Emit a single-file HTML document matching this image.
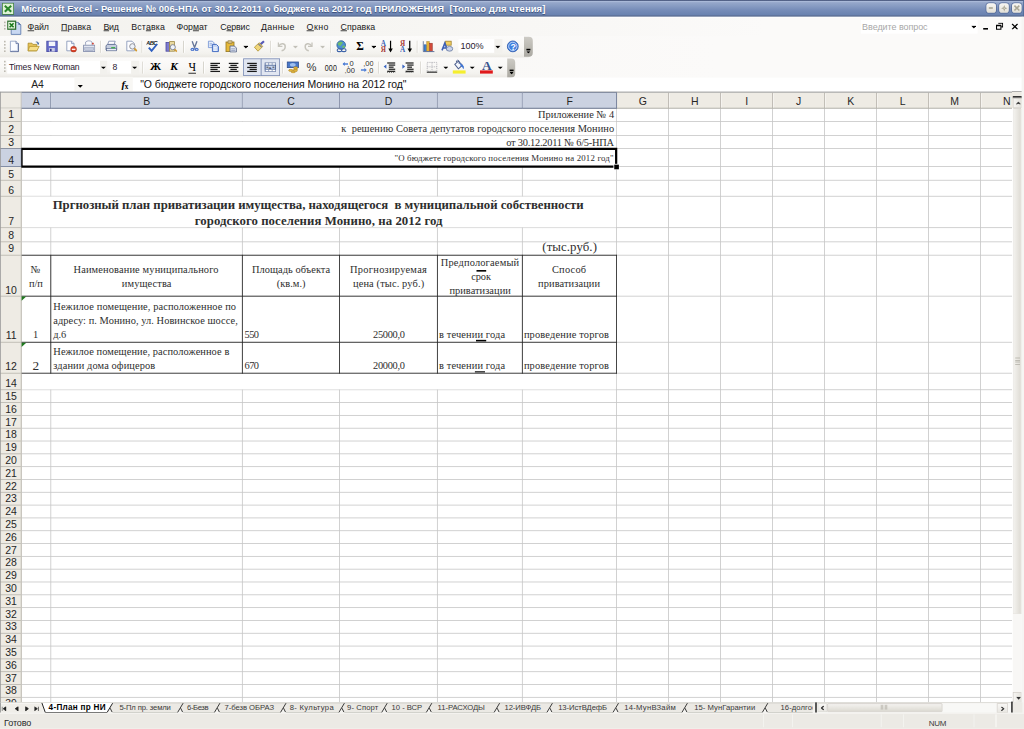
<!DOCTYPE html>
<html lang="ru"><head><meta charset="utf-8"><title>Microsoft Excel</title>
<style>
html,body{margin:0;padding:0;background:#fff;overflow:hidden;width:1024px;height:729px}
#r{position:absolute;left:0;top:0;width:1280px;height:911.25px;transform:scale(0.8);transform-origin:0 0;overflow:hidden;background:#f9f8f6;font-family:"Liberation Sans",sans-serif}
#r div,#r svg{position:absolute}
#r u{text-decoration:underline;text-underline-offset:1px}
</style></head><body><div id="r">
<div style="left:0px;top:0px;width:1280px;height:21px;background:linear-gradient(#4f5c80 0,#56668c 4.5%,#b3c2df 6.5%,#a5b5d5 10%,#95a7ca 16%,#8a9ec4 32%,#768cb8 60%,#6982b0 88%,#5d7199 93%,#586a90 100%);"></div>
<svg style="left:2px;top:3px" width="16" height="16" viewBox="0 0 16 16">
<rect x="0.5" y="0.5" width="15" height="15" fill="#3f7f3f"/><rect x="1.5" y="1.5" width="13" height="13" fill="#dff3d6"/>
<path d="M4 4.2 L12 11.8 M12 4.2 L4 11.8" stroke="#2a862a" stroke-width="2.5"/></svg>
<div style="left:26.47px;top:3px;font:normal bold 11.8px/17px 'Liberation Sans',sans-serif;color:#fff;text-align:left;white-space:nowrap;letter-spacing:0.111px;text-shadow:0 1px 1px #3a4f7a;">Microsoft Excel - Решение № 006-НПА от 30.12.2011 о бюджете на 2012 год ПРИЛОЖЕНИЯ&nbsp; [Только для чтения]</div>
<div style="left:1232.75px;top:3.6px;width:12.4px;height:12.6px;padding-top:1px;border-radius:3.6px;background:linear-gradient(#f8f7f3,#ebe9e2 60%,#e2dfd6);box-shadow:0 0 0 1px rgba(70,92,140,.75);box-sizing:border-box;"><div style="left:3px;top:5.4px;width:5.6px;height:2.2px;background:#a9a694"></div></div>
<div style="left:1248.87px;top:3.6px;width:12.4px;height:12.6px;padding-top:1px;border-radius:3.6px;background:linear-gradient(#f8f7f3,#ebe9e2 60%,#e2dfd6);box-shadow:0 0 0 1px rgba(70,92,140,.75);box-sizing:border-box;"><svg style="left:1.8px;top:2.4px" width="8.6" height="8.6" viewBox="0 0 8 8"><path d="M4 0.3L5.2 3.4H2.8Z M7.7 4L4.6 5.2V2.8Z M4 7.7L2.8 4.6H5.2Z M0.3 4L3.4 2.8V5.2Z" fill="#a9a694"/></svg></div>
<div style="left:1264.99px;top:3.6px;width:12.4px;height:12.6px;padding-top:1px;border-radius:3.6px;background:linear-gradient(#f8f7f3,#ebe9e2 60%,#e2dfd6);box-shadow:0 0 0 1px rgba(70,92,140,.75);box-sizing:border-box;"><svg style="left:2px;top:2.6px" width="8.2" height="8.2" viewBox="0 0 8 8"><path d="M1 1L7 7M7 1L1 7" stroke="#a9a694" stroke-width="1.9"/></svg></div>
<div style="left:1278.5px;top:0px;width:3px;height:21px;background:#4e6897"></div>
<div style="left:0px;top:21px;width:1280px;height:25px;background:linear-gradient(90deg,#f3f2ee,#f6f5f2 35%,#fbfaf9 75%);border-top:1.5px solid #fff;"></div>
<div style="left:5px;top:27px;width:2px;height:2px;background:#b9b6ad"></div>
<div style="left:5px;top:31px;width:2px;height:2px;background:#b9b6ad"></div>
<div style="left:5px;top:35px;width:2px;height:2px;background:#b9b6ad"></div>
<svg style="left:8.5px;top:24.5px" width="19" height="19" viewBox="0 0 19 19">
<path d="M5 3 H14 L17 6 V18 H5 Z" fill="#c9d8f2" stroke="#5573a8" stroke-width="1"/>
<path d="M14 3 L17 6 H14 Z" fill="#46608f"/>
<rect x="0.5" y="1.5" width="10" height="10" fill="#e4f4dc" stroke="#2f6f2f" stroke-width="1.6"/>
<path d="M3 4 L8 9 M8 4 L3 9" stroke="#1d7a1d" stroke-width="2"/></svg>
<div style="left:34.51px;top:26px;font:normal normal 11px/14px 'Liberation Sans',sans-serif;color:#1a1a1a;text-align:left;white-space:nowrap;letter-spacing:-0.191px;"><u>Ф</u>айл</div>
<div style="left:76.38px;top:26px;font:normal normal 11px/14px 'Liberation Sans',sans-serif;color:#1a1a1a;text-align:left;white-space:nowrap;letter-spacing:0.064px;"><u>П</u>равка</div>
<div style="left:129.5px;top:26px;font:normal normal 11px/14px 'Liberation Sans',sans-serif;color:#1a1a1a;text-align:left;white-space:nowrap;letter-spacing:-0.466px;"><u>В</u>ид</div>
<div style="left:164.13px;top:26px;font:normal normal 11px/14px 'Liberation Sans',sans-serif;color:#1a1a1a;text-align:left;white-space:nowrap;letter-spacing:0.160px;">Вст<u>а</u>вка</div>
<div style="left:220.75px;top:26px;font:normal normal 11px/14px 'Liberation Sans',sans-serif;color:#1a1a1a;text-align:left;white-space:nowrap;letter-spacing:-0.071px;">Фор<u>м</u>ат</div>
<div style="left:275.38px;top:26px;font:normal normal 11px/14px 'Liberation Sans',sans-serif;color:#1a1a1a;text-align:left;white-space:nowrap;letter-spacing:-0.164px;">С<u>е</u>рвис</div>
<div style="left:326.38px;top:26px;font:normal normal 11px/14px 'Liberation Sans',sans-serif;color:#1a1a1a;text-align:left;white-space:nowrap;letter-spacing:0.373px;"><u>Д</u>анные</div>
<div style="left:383.25px;top:26px;font:normal normal 11px/14px 'Liberation Sans',sans-serif;color:#1a1a1a;text-align:left;white-space:nowrap;letter-spacing:0.554px;"><u>О</u>кно</div>
<div style="left:425.75px;top:26px;font:normal normal 11px/14px 'Liberation Sans',sans-serif;color:#1a1a1a;text-align:left;white-space:nowrap;letter-spacing:0.011px;"><u>С</u>правка</div>
<div style="left:1075.62px;top:24.6px;width:146.88px;height:17.6px;background:#fff;"></div>
<div style="left:1077.62px;top:25.6px;font:normal normal 11.2px/14px 'Liberation Sans',sans-serif;color:#a8a8a8;text-align:left;white-space:nowrap;letter-spacing:-0.047px;">Введите вопрос</div>
<svg style="left:1213.5800000000002px;top:31.85px" width="6.6" height="3.8" viewBox="0 0 10 5"><path d="M0 0H10L5 5Z" fill="#000"/></svg>
<div style="left:1228.62px;top:35px;width:6.4px;height:2.1px;background:#000"></div>
<svg style="left:1245.0px;top:28px" width="9" height="9.6" viewBox="0 0 11 11">
<path d="M3.5 0.8H10.2V6.5H8" fill="none" stroke="#000" stroke-width="1.6"/><path d="M0.8 4H7.5V10.2H0.8Z" fill="none" stroke="#000" stroke-width="1.6"/><path d="M0.8 4.6H7.5" stroke="#000" stroke-width="1.6"/></svg>
<svg style="left:1264.25px;top:28.6px" width="9" height="8.6" viewBox="0 0 10 10"><path d="M1 1L9 9M9 1L1 9" stroke="#000" stroke-width="2"/></svg>
<div style="left:0px;top:45px;width:1280px;height:52.5px;background:linear-gradient(90deg,#f7f6f3,#f9f8f6 40%,#fbfaf9 70%);"></div>
<div style="left:0px;top:45px;width:662.5px;height:26.5px;background:linear-gradient(#fcfbfa 0,#f9f8f6 45%,#f3f2ee 80%,#eae8e3 100%);border-radius:0 0 3px 0;"></div>
<div style="left:0px;top:72px;width:640.0px;height:25px;background:linear-gradient(#fcfbfa 0,#f9f8f6 45%,#f3f2ee 80%,#eae8e3 100%);border-radius:0 0 3px 0;"></div>
<div style="left:5px;top:51px;width:2px;height:2px;background:#bdbab1"></div>
<div style="left:5px;top:76px;width:2px;height:2px;background:#bdbab1"></div>
<div style="left:5px;top:55px;width:2px;height:2px;background:#bdbab1"></div>
<div style="left:5px;top:80px;width:2px;height:2px;background:#bdbab1"></div>
<div style="left:5px;top:59px;width:2px;height:2px;background:#bdbab1"></div>
<div style="left:5px;top:84px;width:2px;height:2px;background:#bdbab1"></div>
<div style="left:5px;top:63px;width:2px;height:2px;background:#bdbab1"></div>
<div style="left:5px;top:88px;width:2px;height:2px;background:#bdbab1"></div>
<div style="left:125.12px;top:50.5px;width:1px;height:15px;background:#cfccc4"></div>
<div style="left:126.12px;top:50.5px;width:1px;height:15px;background:#fff"></div>
<div style="left:176.62px;top:50.5px;width:1px;height:15px;background:#cfccc4"></div>
<div style="left:177.62px;top:50.5px;width:1px;height:15px;background:#fff"></div>
<div style="left:229.0px;top:50.5px;width:1px;height:15px;background:#cfccc4"></div>
<div style="left:230.0px;top:50.5px;width:1px;height:15px;background:#fff"></div>
<div style="left:337.87px;top:50.5px;width:1px;height:15px;background:#cfccc4"></div>
<div style="left:338.87px;top:50.5px;width:1px;height:15px;background:#fff"></div>
<div style="left:413.25px;top:50.5px;width:1px;height:15px;background:#cfccc4"></div>
<div style="left:414.25px;top:50.5px;width:1px;height:15px;background:#fff"></div>
<div style="left:521.38px;top:50.5px;width:1px;height:15px;background:#cfccc4"></div>
<div style="left:522.38px;top:50.5px;width:1px;height:15px;background:#fff"></div>
<div style="left:178.25px;top:76.5px;width:1px;height:15px;background:#cfccc4"></div>
<div style="left:179.25px;top:76.5px;width:1px;height:15px;background:#fff"></div>
<div style="left:253.88px;top:76.5px;width:1px;height:15px;background:#cfccc4"></div>
<div style="left:254.88px;top:76.5px;width:1px;height:15px;background:#fff"></div>
<div style="left:352.75px;top:76.5px;width:1px;height:15px;background:#cfccc4"></div>
<div style="left:353.75px;top:76.5px;width:1px;height:15px;background:#fff"></div>
<div style="left:473.25px;top:76.5px;width:1px;height:15px;background:#cfccc4"></div>
<div style="left:474.25px;top:76.5px;width:1px;height:15px;background:#fff"></div>
<div style="left:525.12px;top:76.5px;width:1px;height:15px;background:#cfccc4"></div>
<div style="left:526.12px;top:76.5px;width:1px;height:15px;background:#fff"></div>
<svg style="left:10.37px;top:50.0px" width="16" height="16" viewBox="0 0 16 16"><path d="M3 1.5H10L13 4.5V14.5H3Z" fill="#fbfcff" stroke="#8a9ac0"/><path d="M10 1.5V4.5H13" fill="#dfe6f5" stroke="#5d6f9c"/><path d="M13 4.5V14.5H3" stroke="#4f618e" fill="none"/><path d="M11.8 6V13.4H4.5" stroke="#c3cde6" fill="none"/></svg>
<svg style="left:33.88px;top:50.0px" width="16" height="16" viewBox="0 0 16 16"><path d="M1 4H6L7 5.5H12V13.5H1Z" fill="#e8c45a" stroke="#a98a2a"/><path d="M3 8H15L12 13.5H1Z" fill="#f6df8c" stroke="#b6962f"/><path d="M10 2.5C12 1 13.5 2 14 3.5L15 3 14.5 6 12 5 13 4.2C12.5 3 11.5 2.8 10 2.5Z" fill="#4a6ea8"/></svg>
<svg style="left:57.25px;top:50.0px" width="16" height="16" viewBox="0 0 16 16"><rect x="1.5" y="1.5" width="13" height="13" fill="#686dca" stroke="#4347a0"/><rect x="4" y="2" width="8" height="5.5" fill="#f3f4fb"/><rect x="4.5" y="10" width="7" height="4.5" fill="#c9cbe6"/><rect x="5.5" y="11" width="2" height="3" fill="#35388a"/></svg>
<svg style="left:80.5px;top:50.0px" width="16" height="16" viewBox="0 0 16 16"><path d="M2.5 1.5H8.5L11.5 4.5V13.5H2.5Z" fill="#fdfdff" stroke="#7f8fb4"/><path d="M8.5 1.5V4.5H11.5" fill="#dfe6f5" stroke="#7f8fb4"/><circle cx="11" cy="11.5" r="3.6" fill="#d9452b" stroke="#9a2a17" stroke-width=".6"/><rect x="8.8" y="10.8" width="4.4" height="1.6" fill="#fff"/></svg>
<svg style="left:102.62px;top:50.0px" width="16" height="16" viewBox="0 0 16 16"><path d="M4 6V2.5C6 0.5 10 0.5 12 2.5V6" fill="#fbfbfe" stroke="#8c97b5"/><rect x="1.5" y="6.5" width="14" height="8" fill="#e3e7f1" stroke="#7d88a8"/><rect x="3" y="9.5" width="11" height="3.5" fill="#c4cbdd" stroke="#8c97b5" stroke-width=".6"/><rect x="12" y="3.5" width="2.2" height="2" fill="#d0463a"/></svg>
<svg style="left:131.38px;top:50.0px" width="16" height="16" viewBox="0 0 16 16"><path d="M5 1.5H13L11.5 6H3.5Z" fill="#fdfdff" stroke="#7a88ac"/><path d="M1.5 7 3.5 5.5H13.5L15 7V12.5H1.5Z" fill="#c5cddf" stroke="#55658c"/><rect x="2" y="10.5" width="12.5" height="3" fill="#e9edf6" stroke="#55658c" stroke-width=".8"/><rect x="8" y="8.8" width="5" height="1.6" fill="#3fae4a"/></svg>
<svg style="left:155.5px;top:50.0px" width="16" height="16" viewBox="0 0 16 16"><path d="M2.5 1.5H9L12 4.5V13.5H2.5Z" fill="#fdfdff" stroke="#7f8fb4"/><circle cx="9.5" cy="8" r="3.4" fill="#eef3fb" stroke="#8d8d93" stroke-width="1.2"/><path d="M12 10.5L15 13.8" stroke="#d29a2f" stroke-width="2.2"/></svg>
<svg style="left:182.62px;top:50.0px" width="16" height="16" viewBox="0 0 16 16"><text x="-0.5" y="6.2" font-family="Liberation Sans,sans-serif" font-size="7.4" font-weight="bold" font-style="italic" fill="#222" textLength="14.5">ABC</text><path d="M3 9.5L6.5 13.5L13.5 5" fill="none" stroke="#2f5fc0" stroke-width="2.4"/></svg>
<svg style="left:206.38px;top:50.0px" width="16" height="16" viewBox="0 0 16 16"><rect x="1.5" y="3" width="4.5" height="11" fill="#7d7bd0" stroke="#4c4a9e"/><rect x="6" y="2" width="6" height="12" fill="#e9d9a0" stroke="#9f8a45"/><circle cx="10" cy="9" r="3.2" fill="#eef3fb" stroke="#7a8092" stroke-width="1.1"/><path d="M12.3 11.5L15 14.5" stroke="#d29a2f" stroke-width="2"/></svg>
<svg style="left:234.5px;top:50.0px" width="16" height="16" viewBox="0 0 16 16"><path d="M5.2 1.5L8.2 9.5L11.2 1.5" stroke="#66769a" stroke-width="1.7" fill="none"/><ellipse cx="5.6" cy="11.8" rx="2.5" ry="2" fill="#4a74cc"/><ellipse cx="10.8" cy="11.8" rx="2.5" ry="2" fill="#4a74cc"/><ellipse cx="5.4" cy="12" rx="0.9" ry="0.7" fill="#dfe8fa"/><ellipse cx="11" cy="12" rx="0.9" ry="0.7" fill="#dfe8fa"/></svg>
<svg style="left:258.5px;top:50.0px" width="16" height="16" viewBox="0 0 16 16"><path d="M1.5 1.5H6.5L8.5 3.5V9.5H1.5Z" fill="#e4ecfa" stroke="#6f8fd2"/><path d="M3 4.5H6M3 6.5H6" stroke="#8aa5da" stroke-width=".9"/><path d="M6.5 5.5H11.5L14 8V14.5H6.5Z" fill="#c3d4f3" stroke="#3f68c0" stroke-width="1.2"/><path d="M8 9.2H12M8 11.2H12M8 13H12" stroke="#fff" stroke-width=".9"/></svg>
<svg style="left:281.38px;top:50.0px" width="16" height="16" viewBox="0 0 16 16"><rect x="1.5" y="2.5" width="10" height="12" fill="#e6b93a" stroke="#94761f"/><rect x="4" y="1" width="5" height="3" fill="#d9c48a" stroke="#7d6a35" stroke-width=".7"/><path d="M6.5 7.5H12L14.5 10V15H6.5Z" fill="#e4e9f4" stroke="#4f5d80"/><path d="M8 11H13M8 13H13" stroke="#7f8cae" stroke-width=".9"/></svg>
<svg style="left:303.58px;top:56.97px" width="6.6" height="3.8" viewBox="0 0 10 5"><path d="M0 0H10L5 5Z" fill="#000"/></svg>
<svg style="left:316.38px;top:50.0px" width="16" height="16" viewBox="0 0 16 16"><path d="M9.5 5.5L14 1.5" stroke="#5559b8" stroke-width="2.6"/><path d="M2 9L8 3.5L12.5 8L6.5 14Z" fill="#f0d67a" stroke="#b09335"/><path d="M7 5L11 9" stroke="#7d7d85" stroke-width="1.4"/></svg>
<svg style="left:343.88px;top:50.0px" width="16" height="16" viewBox="0 0 16 16"><path d="M4 3V8H9" fill="none" stroke="#c6c4bc" stroke-width="1.6"/><path d="M4.5 7.5C7 3 13 4 12.5 9C12.2 11.5 10.5 13 8 13.5" fill="none" stroke="#c6c4bc" stroke-width="1.8"/></svg>
<svg style="left:366.08px;top:56.97px" width="6.6" height="3.8" viewBox="0 0 10 5"><path d="M0 0H10L5 5Z" fill="#c2c0b8"/></svg>
<svg style="left:378.25px;top:50.0px" width="16" height="16" viewBox="0 0 16 16"><path d="M12 3V8H7" fill="none" stroke="#c6c4bc" stroke-width="1.6"/><path d="M11.5 7.5C9 3 3 4 3.5 9C3.8 11.5 5.5 13 8 13.5" fill="none" stroke="#c6c4bc" stroke-width="1.8"/></svg>
<svg style="left:399.82px;top:56.97px" width="6.6" height="3.8" viewBox="0 0 10 5"><path d="M0 0H10L5 5Z" fill="#c2c0b8"/></svg>
<svg style="left:418.88px;top:50.0px" width="16" height="16" viewBox="0 0 16 16"><circle cx="7.5" cy="6.3" r="5.4" fill="#4c8fd2" stroke="#2f6399"/><path d="M3 4.5C4.5 1.8 8 1.5 9.5 3C9 5 7.5 5.5 6.5 7.5C5 7.5 3.5 6.5 3 4.5Z" fill="#6fbd6a"/><path d="M9 7.5C10.5 6.5 12 7 12.3 8.3C11.5 10 10 10.5 9 9.5Z" fill="#6fbd6a"/><rect x="2.5" y="11" width="5.5" height="3.6" rx="1.8" fill="none" stroke="#3d63a8" stroke-width="1.4"/><rect x="8" y="11" width="5.5" height="3.6" rx="1.8" fill="none" stroke="#3d63a8" stroke-width="1.4"/></svg>
<div style="left:442.5px;top:48.5px;width:15.25px;font:normal bold 14.5px/18px 'Liberation Serif',serif;color:#000;text-align:center;white-space:nowrap;">Σ</div>
<svg style="left:463.58px;top:56.97px" width="6.6" height="3.8" viewBox="0 0 10 5"><path d="M0 0H10L5 5Z" fill="#000"/></svg>
<svg style="left:476.38px;top:50.0px" width="16" height="16" viewBox="0 0 16 16"><text x="0" y="7.5" font-family="Liberation Serif,serif" font-size="9" font-weight="bold" fill="#3b62b5">А</text><text x="0" y="15.5" font-family="Liberation Serif,serif" font-size="9" font-weight="bold" fill="#a8413a">Я</text><path d="M12.2 1V13" stroke="#000" stroke-width="1.5"/><path d="M9.4 10.5H15L12.2 15.5Z" fill="#000"/></svg>
<svg style="left:500.12px;top:50.0px" width="16" height="16" viewBox="0 0 16 16"><text x="0" y="7.5" font-family="Liberation Serif,serif" font-size="9" font-weight="bold" fill="#a8413a">Я</text><text x="0" y="15.5" font-family="Liberation Serif,serif" font-size="9" font-weight="bold" fill="#3b62b5">А</text><path d="M12.2 1V13" stroke="#000" stroke-width="1.5"/><path d="M9.4 10.5H15L12.2 15.5Z" fill="#000"/></svg>
<svg style="left:527.62px;top:50.0px" width="16" height="16" viewBox="0 0 16 16"><rect x="2" y="6" width="3" height="8" fill="#3f7fd0" stroke="#2a5594" stroke-width=".6"/><rect x="5.5" y="2" width="3" height="12" fill="#e8b33a" stroke="#9f7a21" stroke-width=".6"/><rect x="9" y="4" width="3.4" height="10" fill="#d14a3a" stroke="#8e2d22" stroke-width=".6"/><path d="M1 1.5V14.5H15" fill="none" stroke="#5c6f99" stroke-width="1.2"/></svg>
<svg style="left:551.38px;top:50.0px" width="16" height="16" viewBox="0 0 16 16"><rect x="6" y="1.5" width="7" height="5" fill="#f2cf5f" stroke="#a08330"/><path d="M1.5 13L5 4L8.5 13M3 10H7" fill="none" stroke="#3c5fb4" stroke-width="2"/><ellipse cx="11" cy="11" rx="4" ry="3" fill="#c9d3ea" stroke="#6a7a9f"/></svg>
<div style="left:572.5px;top:49.4px;width:45.0px;height:17.1px;background:#fff"></div>
<div style="left:617.5px;top:49.4px;width:10.62px;height:17.1px;background:#f2f1ed"></div>
<div style="left:575.74px;top:50px;font:normal normal 11.4px/15px 'Liberation Sans',sans-serif;color:#2a2030;text-align:left;white-space:nowrap;letter-spacing:-0.122px;">100%</div>
<svg style="left:619.2px;top:57.1px" width="6.6" height="3.8" viewBox="0 0 10 5"><path d="M0 0H10L5 5Z" fill="#000"/></svg>
<svg style="left:633.25px;top:50.0px" width="16" height="16" viewBox="0 0 16 16"><circle cx="8" cy="8" r="6.8" fill="#3f7fe0" stroke="#2a55a8"/><circle cx="8" cy="8" r="5.2" fill="none" stroke="#cfe0fb" stroke-width="1.1"/><text x="5" y="12" font-family="Liberation Sans,sans-serif" font-size="11" font-weight="bold" fill="#fff">?</text></svg>
<div style="left:655.0px;top:46px;width:10.87px;height:25px;background:linear-gradient(#cdcbc5,#bab8b1 55%,#aba9a2);border-radius:0 5px 5px 0;"><div style="left:3px;top:15px;width:5px;height:1.5px;background:#000"></div><svg style="left:3px;top:18px" width="5" height="3" viewBox="0 0 10 6"><path d="M0 0H10L5 6Z" fill="#000"/></svg></div>
<div style="left:633.75px;top:72.5px;width:10.38px;height:24.5px;background:linear-gradient(#cdcbc5,#bab8b1 55%,#aba9a2);border-radius:0 5px 5px 0;"><div style="left:3px;top:14.5px;width:5px;height:1.5px;background:#000"></div><svg style="left:3px;top:17.5px" width="5" height="3" viewBox="0 0 10 6"><path d="M0 0H10L5 6Z" fill="#000"/></svg></div>
<div style="left:9.25px;top:75.5px;width:115.25px;height:16.5px;background:#fff"></div>
<div style="left:124.5px;top:75.5px;width:9.5px;height:16.5px;background:#f2f1ed"></div>
<div style="left:11.39px;top:76.5px;font:normal normal 10.8px/15px 'Liberation Sans',sans-serif;color:#2a2030;text-align:left;white-space:nowrap;letter-spacing:-0.236px;">Times New Roman</div>
<svg style="left:126.2px;top:82.6px" width="6.6" height="3.8" viewBox="0 0 10 5"><path d="M0 0H10L5 5Z" fill="#000"/></svg>
<div style="left:137.75px;top:75.5px;width:26.0px;height:16.5px;background:#fff"></div>
<div style="left:163.75px;top:75.5px;width:9.75px;height:16.5px;background:#f2f1ed"></div>
<div style="left:140.62px;top:76.5px;font:normal normal 10.8px/15px 'Liberation Sans',sans-serif;color:#2a2030;text-align:left;white-space:nowrap;">8</div>
<svg style="left:165.45px;top:82.6px" width="6.6" height="3.8" viewBox="0 0 10 5"><path d="M0 0H10L5 5Z" fill="#000"/></svg>
<div style="left:186.88px;top:74.75px;width:15.0px;font:normal bold 14px/18px 'Liberation Serif',serif;color:#000;text-align:center;white-space:nowrap;">Ж</div>
<div style="left:210.0px;top:74.75px;width:15.0px;font:italic bold 14px/18px 'Liberation Serif',serif;color:#000;text-align:center;white-space:nowrap;">К</div>
<div style="left:232.75px;top:74.75px;width:15.0px;font:normal normal 14.5px/18px 'Liberation Serif',serif;color:#000;text-align:center;white-space:nowrap;text-decoration:underline;text-underline-offset:1.5px;">Ч</div>
<div style="left:304.25px;top:73px;width:22.25px;height:21.5px;background:#e1e6f1;border:1px solid #7c8db5;box-sizing:border-box;"></div>
<div style="left:325.5px;top:73px;width:24.25px;height:21.5px;background:#e1e6f1;border:1px solid #7c8db5;box-sizing:border-box;"></div>
<svg style="left:260.75px;top:75.75px" width="16" height="16" viewBox="0 0 16 16"><rect x="2" y="2.5" width="12" height="1.55" fill="#1a1a1a"/><rect x="2" y="5.0" width="9" height="1.55" fill="#1a1a1a"/><rect x="2" y="7.5" width="12" height="1.55" fill="#1a1a1a"/><rect x="2" y="10.0" width="9" height="1.55" fill="#1a1a1a"/><rect x="2" y="12.5" width="12" height="1.55" fill="#1a1a1a"/></svg>
<svg style="left:283.88px;top:75.75px" width="16" height="16" viewBox="0 0 16 16"><rect x="2" y="2.5" width="12" height="1.55" fill="#1a1a1a"/><rect x="4" y="5.0" width="8" height="1.55" fill="#1a1a1a"/><rect x="2" y="7.5" width="12" height="1.55" fill="#1a1a1a"/><rect x="4" y="10.0" width="8" height="1.55" fill="#1a1a1a"/><rect x="2" y="12.5" width="12" height="1.55" fill="#1a1a1a"/></svg>
<svg style="left:307.38px;top:75.75px" width="16" height="16" viewBox="0 0 16 16"><rect x="2" y="2.5" width="12" height="1.55" fill="#1a1a1a"/><rect x="5" y="5.0" width="9" height="1.55" fill="#1a1a1a"/><rect x="2" y="7.5" width="12" height="1.55" fill="#1a1a1a"/><rect x="5" y="10.0" width="9" height="1.55" fill="#1a1a1a"/><rect x="2" y="12.5" width="12" height="1.55" fill="#1a1a1a"/></svg>
<svg style="left:330.12px;top:75.75px" width="16" height="16" viewBox="0 0 16 16"><rect x="1.5" y="2.5" width="13" height="11" fill="#fff" stroke="#7f8fb4"/><rect x="1.5" y="5.5" width="13" height="5" fill="#c9d6f0" stroke="#46608f"/><path d="M1.5 2.5V13.5M5.8 2.5V5.5M10.2 2.5V5.5M5.8 10.5V13.5M10.2 10.5V13.5" stroke="#7f8fb4"/><text x="6" y="10" font-family="Liberation Sans,sans-serif" font-size="5.5" fill="#000">a</text><path d="M3 8H5.5M10.5 8H13" stroke="#222" stroke-width="1"/></svg>
<svg style="left:357.62px;top:75.75px" width="16" height="16" viewBox="0 0 16 16"><rect x="1" y="1.5" width="14" height="7" fill="#4a78c8" stroke="#2f4f8f"/><ellipse cx="8" cy="5" rx="3.6" ry="2.2" fill="#9fc0ee"/><ellipse cx="11.5" cy="8.6" rx="2.6" ry="1.3" fill="#e7b93f" stroke="#a57f22" stroke-width=".6"/><ellipse cx="11.5" cy="10.4" rx="2.6" ry="1.3" fill="#e7b93f" stroke="#a57f22" stroke-width=".6"/><ellipse cx="11" cy="12.3" rx="2.8" ry="1.4" fill="#e7b93f" stroke="#a57f22" stroke-width=".6"/><ellipse cx="5.5" cy="12" rx="2.8" ry="1.3" fill="#e7b93f" stroke="#a57f22" stroke-width=".6"/><ellipse cx="8.5" cy="14" rx="2.6" ry="1.2" fill="#e7b93f" stroke="#a57f22" stroke-width=".6"/></svg>
<div style="left:381.25px;top:76.25px;width:16.25px;font:normal normal 14px/17px 'Liberation Sans',sans-serif;color:#383838;text-align:center;white-space:nowrap;">%</div>
<div style="left:405.87px;top:77.15px;font:11.6px/15px 'Liberation Sans',sans-serif;color:#222;white-space:nowrap;transform:scaleX(0.76);transform-origin:0 0;letter-spacing:0.2px">000</div>
<svg style="left:427.62px;top:75.75px" width="16" height="16" viewBox="0 0 16 16"><path d="M1 4H7" stroke="#4f7fd6" stroke-width="1.6"/><path d="M0 4L3 1.5V6.5Z" fill="#4f7fd6"/><text x="9" y="7" font-family="Liberation Sans,sans-serif" font-size="9.4" fill="#2e2e2e">0</text><text x="2.5" y="15" font-family="Liberation Sans,sans-serif" font-size="9.4" fill="#2e2e2e">,00</text><text x="6" y="8" font-family="Liberation Sans,sans-serif" font-size="9.4" fill="#2e2e2e">,</text></svg>
<svg style="left:450.75px;top:75.75px" width="16" height="16" viewBox="0 0 16 16"><text x="3" y="7" font-family="Liberation Sans,sans-serif" font-size="9.4" fill="#2e2e2e">,00</text><path d="M0 11.5H6" stroke="#4f7fd6" stroke-width="1.6"/><path d="M7.5 11.5L4.5 9V14Z" fill="#4f7fd6"/><text x="8" y="15" font-family="Liberation Sans,sans-serif" font-size="9.4" fill="#2e2e2e">,0</text></svg>
<svg style="left:478.88px;top:75.75px" width="16" height="16" viewBox="0 0 16 16"><rect x="5" y="2.0" width="10" height="1.5" fill="#1a1a1a"/><rect x="7" y="4.6" width="8" height="1.5" fill="#1a1a1a"/><rect x="7" y="7.2" width="6" height="1.5" fill="#1a1a1a"/><rect x="7" y="9.8" width="8" height="1.5" fill="#1a1a1a"/><rect x="5" y="12.4" width="10" height="1.5" fill="#1a1a1a"/><path d="M5 14.6H15" stroke="#555" stroke-width="1" stroke-dasharray="1.2 1.2"/><path d="M0.5 7.2L4 4.5V10Z" fill="#3b67c2"/></svg>
<svg style="left:502.25px;top:75.75px" width="16" height="16" viewBox="0 0 16 16"><rect x="5" y="2.0" width="10" height="1.5" fill="#1a1a1a"/><rect x="7" y="4.6" width="8" height="1.5" fill="#1a1a1a"/><rect x="7" y="7.2" width="6" height="1.5" fill="#1a1a1a"/><rect x="7" y="9.8" width="8" height="1.5" fill="#1a1a1a"/><rect x="5" y="12.4" width="10" height="1.5" fill="#1a1a1a"/><path d="M5 14.6H15" stroke="#555" stroke-width="1" stroke-dasharray="1.2 1.2"/><path d="M4.5 7.2L1 4.5V10Z" fill="#3b67c2"/></svg>
<svg style="left:532.38px;top:75.75px" width="16" height="16" viewBox="0 0 16 16"><path d="M2 2H14V13H2Z M8 2V13 M2 7.5H14" fill="none" stroke="#a9a9b0" stroke-width="1" stroke-dasharray="1.5 1.2"/><path d="M1.5 14.2H14.5" stroke="#000" stroke-width="1.2"/></svg>
<svg style="left:553.7px;top:82.6px" width="6.6" height="3.8" viewBox="0 0 10 5"><path d="M0 0H10L5 5Z" fill="#000"/></svg>
<svg style="left:565.12px;top:74.0px" width="16" height="16" viewBox="0 0 16 16"><path d="M3.5 6.5L8 2.5L13 7.5L8 12Z" fill="#f4f7fd" stroke="#4d5f8e" stroke-width="1.3"/><path d="M5.5 3.5C5 0.8 8.8 0.3 9 3.2V6" fill="none" stroke="#4d5f8e" stroke-width="1.2"/><path d="M9.5 4.5L13.5 7.5C15.2 8.5 15.3 11 14.2 12.6C13.4 10.5 12.6 9.5 11 8.8Z" fill="#3f76d6"/></svg>
<div style="left:566.0px;top:87.75px;width:15.75px;height:4.5px;background:#f5ee2e"></div>
<svg style="left:587.32px;top:82.6px" width="6.6" height="3.8" viewBox="0 0 10 5"><path d="M0 0H10L5 5Z" fill="#000"/></svg>
<div style="left:600.75px;top:71.47px;width:15.75px;font:normal bold 16.8px/21px 'Liberation Serif',serif;color:#39558f;text-align:center;white-space:nowrap;">A</div>
<div style="left:600.0px;top:87.75px;width:15.75px;height:4.5px;background:#e0191b"></div>
<svg style="left:621.95px;top:82.6px" width="6.6" height="3.8" viewBox="0 0 10 5"><path d="M0 0H10L5 5Z" fill="#000"/></svg>
<div style="left:0px;top:96.6px;width:1280px;height:19px;background:#fff"></div>
<div style="left:92.5px;top:96.4px;width:73.0px;height:17.8px;background:#f8f7f4"></div>
<div style="left:0px;top:97.5px;width:93.75px;font:normal normal 13px/15px 'Liberation Sans',sans-serif;color:#222;text-align:center;white-space:nowrap;">A4</div>
<svg style="left:96.95px;top:105.85px" width="6.6" height="3.8" viewBox="0 0 10 5"><path d="M0 0H10L5 5Z" fill="#000"/></svg>
<div style="left:151.88px;top:97px;font:italic bold 13.5px/17px 'Liberation Serif',serif;color:#000">f<span style="font-size:9px;font-style:normal;position:relative;top:1px;left:-0.5px">x</span></div>
<div style="left:175.29px;top:97.6px;font:normal normal 13.1px/16px 'Liberation Sans',sans-serif;color:#111;text-align:left;white-space:nowrap;letter-spacing:-0.104px;">"О бюджете городского поселения Монино на 2012 год"</div>
<div style="left:0;top:114.2px;width:1265.0px;height:763.67px;overflow:hidden;background:#fff">
<svg style="left:0;top:0" width="1265.0" height="763.67" viewBox="0 0 1265.0 763.67"><rect x="27.00" y="37.50" width="1265.00" height="1.00" fill="#c6c6c6"/><rect x="27.00" y="54.80" width="1265.00" height="1.00" fill="#c6c6c6"/><rect x="27.00" y="71.10" width="1265.00" height="1.00" fill="#c6c6c6"/><rect x="27.00" y="93.60" width="1265.00" height="1.00" fill="#c6c6c6"/><rect x="27.00" y="110.80" width="1265.00" height="1.00" fill="#c6c6c6"/><rect x="27.00" y="130.80" width="1265.00" height="1.00" fill="#c6c6c6"/><rect x="27.00" y="170.10" width="1265.00" height="1.00" fill="#c6c6c6"/><rect x="27.00" y="187.80" width="1265.00" height="1.00" fill="#c6c6c6"/><rect x="27.00" y="204.50" width="1265.00" height="1.00" fill="#c6c6c6"/><rect x="27.00" y="255.70" width="1265.00" height="1.00" fill="#c6c6c6"/><rect x="27.00" y="313.30" width="1265.00" height="1.00" fill="#c6c6c6"/><rect x="27.00" y="352.00" width="1265.00" height="1.00" fill="#c6c6c6"/><rect x="27.00" y="372.70" width="1265.00" height="1.00" fill="#c6c6c6"/><rect x="27.00" y="388.72" width="1265.00" height="1.00" fill="#c6c6c6"/><rect x="27.00" y="404.74" width="1265.00" height="1.00" fill="#c6c6c6"/><rect x="27.00" y="420.76" width="1265.00" height="1.00" fill="#c6c6c6"/><rect x="27.00" y="436.78" width="1265.00" height="1.00" fill="#c6c6c6"/><rect x="27.00" y="452.80" width="1265.00" height="1.00" fill="#c6c6c6"/><rect x="27.00" y="468.82" width="1265.00" height="1.00" fill="#c6c6c6"/><rect x="27.00" y="484.84" width="1265.00" height="1.00" fill="#c6c6c6"/><rect x="27.00" y="500.86" width="1265.00" height="1.00" fill="#c6c6c6"/><rect x="27.00" y="516.88" width="1265.00" height="1.00" fill="#c6c6c6"/><rect x="27.00" y="532.90" width="1265.00" height="1.00" fill="#c6c6c6"/><rect x="27.00" y="548.92" width="1265.00" height="1.00" fill="#c6c6c6"/><rect x="27.00" y="564.94" width="1265.00" height="1.00" fill="#c6c6c6"/><rect x="27.00" y="580.96" width="1265.00" height="1.00" fill="#c6c6c6"/><rect x="27.00" y="596.98" width="1265.00" height="1.00" fill="#c6c6c6"/><rect x="27.00" y="613.00" width="1265.00" height="1.00" fill="#c6c6c6"/><rect x="27.00" y="629.02" width="1265.00" height="1.00" fill="#c6c6c6"/><rect x="27.00" y="645.04" width="1265.00" height="1.00" fill="#c6c6c6"/><rect x="27.00" y="661.06" width="1265.00" height="1.00" fill="#c6c6c6"/><rect x="27.00" y="677.08" width="1265.00" height="1.00" fill="#c6c6c6"/><rect x="27.00" y="693.10" width="1265.00" height="1.00" fill="#c6c6c6"/><rect x="27.00" y="709.12" width="1265.00" height="1.00" fill="#c6c6c6"/><rect x="27.00" y="725.14" width="1265.00" height="1.00" fill="#c6c6c6"/><rect x="27.00" y="741.16" width="1265.00" height="1.00" fill="#c6c6c6"/><rect x="27.00" y="757.18" width="1265.00" height="1.00" fill="#c6c6c6"/><rect x="27.00" y="773.20" width="1265.00" height="1.00" fill="#c6c6c6"/><rect x="63.00" y="21.40" width="1.00" height="800.00" fill="#c6c6c6"/><rect x="302.40" y="21.40" width="1.00" height="800.00" fill="#c6c6c6"/><rect x="423.80" y="21.40" width="1.00" height="800.00" fill="#c6c6c6"/><rect x="546.20" y="21.40" width="1.00" height="800.00" fill="#c6c6c6"/><rect x="652.40" y="21.40" width="1.00" height="800.00" fill="#c6c6c6"/><rect x="770.20" y="21.40" width="1.00" height="800.00" fill="#c6c6c6"/><rect x="835.20" y="21.40" width="1.00" height="800.00" fill="#c6c6c6"/><rect x="900.20" y="21.40" width="1.00" height="800.00" fill="#c6c6c6"/><rect x="965.20" y="21.40" width="1.00" height="800.00" fill="#c6c6c6"/><rect x="1030.20" y="21.40" width="1.00" height="800.00" fill="#c6c6c6"/><rect x="1095.20" y="21.40" width="1.00" height="800.00" fill="#c6c6c6"/><rect x="1160.20" y="21.40" width="1.00" height="800.00" fill="#c6c6c6"/><rect x="1225.20" y="21.40" width="1.00" height="800.00" fill="#c6c6c6"/><rect x="1290.20" y="21.40" width="1.00" height="800.00" fill="#c6c6c6"/><rect x="27.00" y="21.40" width="743.20" height="16.10" fill="#fff"/><rect x="27.00" y="38.50" width="743.20" height="16.30" fill="#fff"/><rect x="27.00" y="55.80" width="743.20" height="15.30" fill="#fff"/><rect x="27.00" y="72.10" width="743.20" height="21.50" fill="#fff"/><rect x="27.00" y="131.80" width="743.20" height="38.30" fill="#fff"/><rect x="27.00" y="353.00" width="743.20" height="19.70" fill="#fff"/><rect x="0.00" y="-0.20" width="1265.00" height="1.10" fill="#bdbdbd"/><rect x="0.00" y="0.80" width="1265.00" height="1.20" fill="#909090"/><rect x="0.00" y="1.90" width="1265.00" height="19.50" fill="#eeebe4"/><rect x="0.00" y="20.70" width="1265.00" height="1.10" fill="#a9a7a1"/><rect x="0.00" y="21.40" width="27.00" height="800.00" fill="#eeebe4"/><rect x="26.00" y="1.90" width="1.00" height="800.00" fill="#aeaba3"/><rect x="27.00" y="1.90" width="37.00" height="19.50" fill="#cbd2e1"/><rect x="27.00" y="0.80" width="37.00" height="1.20" fill="#78829a"/><rect x="27.00" y="20.70" width="37.00" height="1.20" fill="#6f7b96"/><rect x="63.00" y="1.90" width="1.10" height="19.50" fill="#707b94"/><rect x="64.10" y="2.90" width="1.00" height="17.40" fill="#dde3ef"/><rect x="64.00" y="1.90" width="239.40" height="19.50" fill="#cbd2e1"/><rect x="64.00" y="0.80" width="239.40" height="1.20" fill="#78829a"/><rect x="64.00" y="20.70" width="239.40" height="1.20" fill="#6f7b96"/><rect x="302.40" y="1.90" width="1.10" height="19.50" fill="#707b94"/><rect x="303.50" y="2.90" width="1.00" height="17.40" fill="#dde3ef"/><rect x="303.40" y="1.90" width="121.40" height="19.50" fill="#cbd2e1"/><rect x="303.40" y="0.80" width="121.40" height="1.20" fill="#78829a"/><rect x="303.40" y="20.70" width="121.40" height="1.20" fill="#6f7b96"/><rect x="423.80" y="1.90" width="1.10" height="19.50" fill="#707b94"/><rect x="424.90" y="2.90" width="1.00" height="17.40" fill="#dde3ef"/><rect x="424.80" y="1.90" width="122.40" height="19.50" fill="#cbd2e1"/><rect x="424.80" y="0.80" width="122.40" height="1.20" fill="#78829a"/><rect x="424.80" y="20.70" width="122.40" height="1.20" fill="#6f7b96"/><rect x="546.20" y="1.90" width="1.10" height="19.50" fill="#707b94"/><rect x="547.30" y="2.90" width="1.00" height="17.40" fill="#dde3ef"/><rect x="547.20" y="1.90" width="106.20" height="19.50" fill="#cbd2e1"/><rect x="547.20" y="0.80" width="106.20" height="1.20" fill="#78829a"/><rect x="547.20" y="20.70" width="106.20" height="1.20" fill="#6f7b96"/><rect x="652.40" y="1.90" width="1.10" height="19.50" fill="#707b94"/><rect x="653.50" y="2.90" width="1.00" height="17.40" fill="#dde3ef"/><rect x="653.40" y="1.90" width="117.80" height="19.50" fill="#cbd2e1"/><rect x="653.40" y="0.80" width="117.80" height="1.20" fill="#78829a"/><rect x="653.40" y="20.70" width="117.80" height="1.20" fill="#6f7b96"/><rect x="770.20" y="1.90" width="1.10" height="19.50" fill="#707b94"/><rect x="835.20" y="1.90" width="1.00" height="19.50" fill="#b3b0a8"/><rect x="836.20" y="2.90" width="1.00" height="17.40" fill="#f7f6f2"/><rect x="900.20" y="1.90" width="1.00" height="19.50" fill="#b3b0a8"/><rect x="901.20" y="2.90" width="1.00" height="17.40" fill="#f7f6f2"/><rect x="965.20" y="1.90" width="1.00" height="19.50" fill="#b3b0a8"/><rect x="966.20" y="2.90" width="1.00" height="17.40" fill="#f7f6f2"/><rect x="1030.20" y="1.90" width="1.00" height="19.50" fill="#b3b0a8"/><rect x="1031.20" y="2.90" width="1.00" height="17.40" fill="#f7f6f2"/><rect x="1095.20" y="1.90" width="1.00" height="19.50" fill="#b3b0a8"/><rect x="1096.20" y="2.90" width="1.00" height="17.40" fill="#f7f6f2"/><rect x="1160.20" y="1.90" width="1.00" height="19.50" fill="#b3b0a8"/><rect x="1161.20" y="2.90" width="1.00" height="17.40" fill="#f7f6f2"/><rect x="1225.20" y="1.90" width="1.00" height="19.50" fill="#b3b0a8"/><rect x="1226.20" y="2.90" width="1.00" height="17.40" fill="#f7f6f2"/><rect x="1290.20" y="1.90" width="1.00" height="19.50" fill="#b3b0a8"/><rect x="1291.20" y="2.90" width="1.00" height="17.40" fill="#f7f6f2"/><rect x="0.00" y="37.50" width="26.00" height="1.00" fill="#b7b4ac"/><rect x="0.00" y="54.80" width="26.00" height="1.00" fill="#b7b4ac"/><rect x="0.00" y="71.10" width="26.00" height="1.00" fill="#b7b4ac"/><rect x="0.00" y="72.10" width="27.00" height="22.50" fill="#cbd2e1"/><rect x="0.00" y="93.60" width="27.00" height="1.00" fill="#6f7b96"/><rect x="0.00" y="71.10" width="27.00" height="1.00" fill="#7f889c"/><rect x="26.00" y="72.10" width="1.00" height="22.50" fill="#707b94"/><rect x="0.00" y="110.80" width="26.00" height="1.00" fill="#b7b4ac"/><rect x="0.00" y="130.80" width="26.00" height="1.00" fill="#b7b4ac"/><rect x="0.00" y="170.10" width="26.00" height="1.00" fill="#b7b4ac"/><rect x="0.00" y="187.80" width="26.00" height="1.00" fill="#b7b4ac"/><rect x="0.00" y="204.50" width="26.00" height="1.00" fill="#b7b4ac"/><rect x="0.00" y="255.70" width="26.00" height="1.00" fill="#b7b4ac"/><rect x="0.00" y="313.30" width="26.00" height="1.00" fill="#b7b4ac"/><rect x="0.00" y="352.00" width="26.00" height="1.00" fill="#b7b4ac"/><rect x="0.00" y="372.70" width="26.00" height="1.00" fill="#b7b4ac"/><rect x="0.00" y="388.72" width="26.00" height="1.00" fill="#b7b4ac"/><rect x="0.00" y="404.74" width="26.00" height="1.00" fill="#b7b4ac"/><rect x="0.00" y="420.76" width="26.00" height="1.00" fill="#b7b4ac"/><rect x="0.00" y="436.78" width="26.00" height="1.00" fill="#b7b4ac"/><rect x="0.00" y="452.80" width="26.00" height="1.00" fill="#b7b4ac"/><rect x="0.00" y="468.82" width="26.00" height="1.00" fill="#b7b4ac"/><rect x="0.00" y="484.84" width="26.00" height="1.00" fill="#b7b4ac"/><rect x="0.00" y="500.86" width="26.00" height="1.00" fill="#b7b4ac"/><rect x="0.00" y="516.88" width="26.00" height="1.00" fill="#b7b4ac"/><rect x="0.00" y="532.90" width="26.00" height="1.00" fill="#b7b4ac"/><rect x="0.00" y="548.92" width="26.00" height="1.00" fill="#b7b4ac"/><rect x="0.00" y="564.94" width="26.00" height="1.00" fill="#b7b4ac"/><rect x="0.00" y="580.96" width="26.00" height="1.00" fill="#b7b4ac"/><rect x="0.00" y="596.98" width="26.00" height="1.00" fill="#b7b4ac"/><rect x="0.00" y="613.00" width="26.00" height="1.00" fill="#b7b4ac"/><rect x="0.00" y="629.02" width="26.00" height="1.00" fill="#b7b4ac"/><rect x="0.00" y="645.04" width="26.00" height="1.00" fill="#b7b4ac"/><rect x="0.00" y="661.06" width="26.00" height="1.00" fill="#b7b4ac"/><rect x="0.00" y="677.08" width="26.00" height="1.00" fill="#b7b4ac"/><rect x="0.00" y="693.10" width="26.00" height="1.00" fill="#b7b4ac"/><rect x="0.00" y="709.12" width="26.00" height="1.00" fill="#b7b4ac"/><rect x="0.00" y="725.14" width="26.00" height="1.00" fill="#b7b4ac"/><rect x="0.00" y="741.16" width="26.00" height="1.00" fill="#b7b4ac"/><rect x="0.00" y="757.18" width="26.00" height="1.00" fill="#b7b4ac"/><rect x="0.00" y="773.20" width="26.00" height="1.00" fill="#b7b4ac"/><rect x="0.00" y="0.80" width="1.00" height="800.00" fill="#9a9a9a"/><rect x="27.00" y="255.70" width="744.20" height="1.00" fill="#222"/><rect x="27.00" y="313.30" width="744.20" height="1.00" fill="#222"/><rect x="27.00" y="352.00" width="744.20" height="1.00" fill="#222"/><rect x="27.00" y="204.50" width="744.20" height="1.00" fill="#222"/><rect x="63.00" y="204.50" width="1.00" height="148.50" fill="#222"/><rect x="302.40" y="204.50" width="1.00" height="148.50" fill="#222"/><rect x="423.80" y="204.50" width="1.00" height="148.50" fill="#222"/><rect x="546.20" y="204.50" width="1.00" height="148.50" fill="#222"/><rect x="652.40" y="204.50" width="1.00" height="148.50" fill="#222"/><rect x="770.20" y="204.50" width="1.00" height="148.50" fill="#222"/><rect x="595.62" y="223.55" width="12.12" height="2.00" fill="#000"/><rect x="595.00" y="310.80" width="12.75" height="2.00" fill="#000"/><rect x="593.62" y="349.80" width="12.62" height="2.00" fill="#444"/><path d="M27 256.70h5.8l-5.8 5.3Z" fill="#1f7a1f"/><path d="M27 314.30h5.8l-5.8 5.3Z" fill="#1f7a1f"/><path d="M26.6 70.70H771.6V95.70H26.6Z M28.3 73.40V93.00H768.8000000000001V73.40Z" fill="#000" fill-rule="evenodd"/><rect x="766.80" y="90.80" width="7.20" height="7.20" fill="#fff"/><rect x="767.80" y="91.80" width="5.80" height="5.80" fill="#000"/></svg>
<div style="left:15.20px;top:4.38px;width:60px;text-align:center;font:13.1px/16px 'Liberation Sans',sans-serif;color:#262626;white-space:nowrap">A</div>
<div style="left:153.40px;top:4.38px;width:60px;text-align:center;font:13.1px/16px 'Liberation Sans',sans-serif;color:#262626;white-space:nowrap">B</div>
<div style="left:333.80px;top:4.38px;width:60px;text-align:center;font:13.1px/16px 'Liberation Sans',sans-serif;color:#262626;white-space:nowrap">C</div>
<div style="left:455.70px;top:4.38px;width:60px;text-align:center;font:13.1px/16px 'Liberation Sans',sans-serif;color:#262626;white-space:nowrap">D</div>
<div style="left:570.00px;top:4.38px;width:60px;text-align:center;font:13.1px/16px 'Liberation Sans',sans-serif;color:#262626;white-space:nowrap">E</div>
<div style="left:682.00px;top:4.38px;width:60px;text-align:center;font:13.1px/16px 'Liberation Sans',sans-serif;color:#262626;white-space:nowrap">F</div>
<div style="left:773.40px;top:4.38px;width:60px;text-align:center;font:13.1px/16px 'Liberation Sans',sans-serif;color:#262626;white-space:nowrap">G</div>
<div style="left:838.40px;top:4.38px;width:60px;text-align:center;font:13.1px/16px 'Liberation Sans',sans-serif;color:#262626;white-space:nowrap">H</div>
<div style="left:903.40px;top:4.38px;width:60px;text-align:center;font:13.1px/16px 'Liberation Sans',sans-serif;color:#262626;white-space:nowrap">I</div>
<div style="left:968.40px;top:4.38px;width:60px;text-align:center;font:13.1px/16px 'Liberation Sans',sans-serif;color:#262626;white-space:nowrap">J</div>
<div style="left:1033.40px;top:4.38px;width:60px;text-align:center;font:13.1px/16px 'Liberation Sans',sans-serif;color:#262626;white-space:nowrap">K</div>
<div style="left:1098.40px;top:4.38px;width:60px;text-align:center;font:13.1px/16px 'Liberation Sans',sans-serif;color:#262626;white-space:nowrap">L</div>
<div style="left:1163.40px;top:4.38px;width:60px;text-align:center;font:13.1px/16px 'Liberation Sans',sans-serif;color:#262626;white-space:nowrap">M</div>
<div style="left:1228.40px;top:4.38px;width:60px;text-align:center;font:13.1px/16px 'Liberation Sans',sans-serif;color:#262626;white-space:nowrap">N</div>
<div style="left:-16.13px;top:22.26px;width:60px;text-align:center;font:13.1px/16px 'Liberation Sans',sans-serif;color:#262626;white-space:nowrap">1</div>
<div style="left:-16.13px;top:39.56px;width:60px;text-align:center;font:13.1px/16px 'Liberation Sans',sans-serif;color:#262626;white-space:nowrap">2</div>
<div style="left:-16.13px;top:55.86px;width:60px;text-align:center;font:13.1px/16px 'Liberation Sans',sans-serif;color:#262626;white-space:nowrap">3</div>
<div style="left:-16.13px;top:78.36px;width:60px;text-align:center;font:13.1px/16px 'Liberation Sans',sans-serif;color:#262626;white-space:nowrap">4</div>
<div style="left:-16.13px;top:95.56px;width:60px;text-align:center;font:13.1px/16px 'Liberation Sans',sans-serif;color:#262626;white-space:nowrap">5</div>
<div style="left:-16.13px;top:115.56px;width:60px;text-align:center;font:13.1px/16px 'Liberation Sans',sans-serif;color:#262626;white-space:nowrap">6</div>
<div style="left:-16.13px;top:154.86px;width:60px;text-align:center;font:13.1px/16px 'Liberation Sans',sans-serif;color:#262626;white-space:nowrap">7</div>
<div style="left:-16.13px;top:172.56px;width:60px;text-align:center;font:13.1px/16px 'Liberation Sans',sans-serif;color:#262626;white-space:nowrap">8</div>
<div style="left:-16.13px;top:189.26px;width:60px;text-align:center;font:13.1px/16px 'Liberation Sans',sans-serif;color:#262626;white-space:nowrap">9</div>
<div style="left:-16.13px;top:240.46px;width:60px;text-align:center;font:13.1px/16px 'Liberation Sans',sans-serif;color:#262626;white-space:nowrap">10</div>
<div style="left:-16.13px;top:298.06px;width:60px;text-align:center;font:13.1px/16px 'Liberation Sans',sans-serif;color:#262626;white-space:nowrap">11</div>
<div style="left:-16.13px;top:336.76px;width:60px;text-align:center;font:13.1px/16px 'Liberation Sans',sans-serif;color:#262626;white-space:nowrap">12</div>
<div style="left:-16.13px;top:357.46px;width:60px;text-align:center;font:13.1px/16px 'Liberation Sans',sans-serif;color:#262626;white-space:nowrap">14</div>
<div style="left:-16.13px;top:373.48px;width:60px;text-align:center;font:13.1px/16px 'Liberation Sans',sans-serif;color:#262626;white-space:nowrap">15</div>
<div style="left:-16.13px;top:389.50px;width:60px;text-align:center;font:13.1px/16px 'Liberation Sans',sans-serif;color:#262626;white-space:nowrap">16</div>
<div style="left:-16.13px;top:405.52px;width:60px;text-align:center;font:13.1px/16px 'Liberation Sans',sans-serif;color:#262626;white-space:nowrap">17</div>
<div style="left:-16.13px;top:421.54px;width:60px;text-align:center;font:13.1px/16px 'Liberation Sans',sans-serif;color:#262626;white-space:nowrap">18</div>
<div style="left:-16.13px;top:437.56px;width:60px;text-align:center;font:13.1px/16px 'Liberation Sans',sans-serif;color:#262626;white-space:nowrap">19</div>
<div style="left:-16.13px;top:453.58px;width:60px;text-align:center;font:13.1px/16px 'Liberation Sans',sans-serif;color:#262626;white-space:nowrap">20</div>
<div style="left:-16.13px;top:469.60px;width:60px;text-align:center;font:13.1px/16px 'Liberation Sans',sans-serif;color:#262626;white-space:nowrap">21</div>
<div style="left:-16.13px;top:485.62px;width:60px;text-align:center;font:13.1px/16px 'Liberation Sans',sans-serif;color:#262626;white-space:nowrap">22</div>
<div style="left:-16.13px;top:501.64px;width:60px;text-align:center;font:13.1px/16px 'Liberation Sans',sans-serif;color:#262626;white-space:nowrap">23</div>
<div style="left:-16.13px;top:517.66px;width:60px;text-align:center;font:13.1px/16px 'Liberation Sans',sans-serif;color:#262626;white-space:nowrap">24</div>
<div style="left:-16.13px;top:533.68px;width:60px;text-align:center;font:13.1px/16px 'Liberation Sans',sans-serif;color:#262626;white-space:nowrap">25</div>
<div style="left:-16.13px;top:549.70px;width:60px;text-align:center;font:13.1px/16px 'Liberation Sans',sans-serif;color:#262626;white-space:nowrap">26</div>
<div style="left:-16.13px;top:565.72px;width:60px;text-align:center;font:13.1px/16px 'Liberation Sans',sans-serif;color:#262626;white-space:nowrap">27</div>
<div style="left:-16.13px;top:581.74px;width:60px;text-align:center;font:13.1px/16px 'Liberation Sans',sans-serif;color:#262626;white-space:nowrap">28</div>
<div style="left:-16.13px;top:597.76px;width:60px;text-align:center;font:13.1px/16px 'Liberation Sans',sans-serif;color:#262626;white-space:nowrap">29</div>
<div style="left:-16.13px;top:613.78px;width:60px;text-align:center;font:13.1px/16px 'Liberation Sans',sans-serif;color:#262626;white-space:nowrap">30</div>
<div style="left:-16.13px;top:629.80px;width:60px;text-align:center;font:13.1px/16px 'Liberation Sans',sans-serif;color:#262626;white-space:nowrap">31</div>
<div style="left:-16.13px;top:645.82px;width:60px;text-align:center;font:13.1px/16px 'Liberation Sans',sans-serif;color:#262626;white-space:nowrap">32</div>
<div style="left:-16.13px;top:661.84px;width:60px;text-align:center;font:13.1px/16px 'Liberation Sans',sans-serif;color:#262626;white-space:nowrap">33</div>
<div style="left:-16.13px;top:677.86px;width:60px;text-align:center;font:13.1px/16px 'Liberation Sans',sans-serif;color:#262626;white-space:nowrap">34</div>
<div style="left:-16.13px;top:693.88px;width:60px;text-align:center;font:13.1px/16px 'Liberation Sans',sans-serif;color:#262626;white-space:nowrap">35</div>
<div style="left:-16.13px;top:709.90px;width:60px;text-align:center;font:13.1px/16px 'Liberation Sans',sans-serif;color:#262626;white-space:nowrap">36</div>
<div style="left:-16.13px;top:725.92px;width:60px;text-align:center;font:13.1px/16px 'Liberation Sans',sans-serif;color:#262626;white-space:nowrap">37</div>
<div style="left:-16.13px;top:741.94px;width:60px;text-align:center;font:13.1px/16px 'Liberation Sans',sans-serif;color:#262626;white-space:nowrap">38</div>
<div style="left:-16.13px;top:757.96px;width:60px;text-align:center;font:13.1px/16px 'Liberation Sans',sans-serif;color:#262626;white-space:nowrap">39</div>
<div style="left:672.48px;top:21.49px;font:normal normal 13px/15.6px 'Liberation Serif',serif;color:#2e2e2e;white-space:nowrap;letter-spacing:-0.002px">Приложение № 4</div>
<div style="left:426.60px;top:38.36px;font:normal normal 13px/15.6px 'Liberation Serif',serif;color:#2e2e2e;white-space:nowrap;letter-spacing:0.065px">к&nbsp; решению Совета депутатов городского поселения Монино</div>
<div style="left:632.86px;top:55.49px;font:normal normal 13px/15.6px 'Liberation Serif',serif;color:#2e2e2e;white-space:nowrap;letter-spacing:-0.296px">от 30.12.2011 № 6/5-НПА</div>
<div style="left:493.06px;top:76.49px;font:normal normal 11px/13.2px 'Liberation Serif',serif;color:#2e2e2e;white-space:nowrap;letter-spacing:0.224px">"О бюджете городского поселения Монино на 2012 год"</div>
<div style="left:65.86px;top:131.43px;font:normal bold 16px/19.2px 'Liberation Serif',serif;color:#2e2e2e;white-space:nowrap;letter-spacing:-0.053px">Пргнозный план приватизации имущества, находящегося&nbsp; в муниципальной собственности</div>
<div style="left:243.49px;top:152.30px;font:normal bold 16px/19.2px 'Liberation Serif',serif;color:#2e2e2e;white-space:nowrap;letter-spacing:0.057px">городского поселения Монино, на 2012 год</div>
<div style="left:677.86px;top:185.18px;font:normal normal 16px/19.2px 'Liberation Serif',serif;color:#2e2e2e;white-space:nowrap;letter-spacing:0.118px">(тыс.руб.)</div>
<div style="left:38.48px;top:214.99px;font:normal normal 13px/15.6px 'Liberation Serif',serif;color:#2e2e2e;white-space:nowrap;letter-spacing:1.259px">№</div>
<div style="left:36.23px;top:232.36px;font:normal normal 13px/15.6px 'Liberation Serif',serif;color:#2e2e2e;white-space:nowrap;letter-spacing:-0.058px">п/п</div>
<div style="left:91.86px;top:214.99px;font:normal normal 13px/15.6px 'Liberation Serif',serif;color:#2e2e2e;white-space:nowrap;letter-spacing:0.164px">Наименование муниципального</div>
<div style="left:152.23px;top:232.36px;font:normal normal 13px/15.6px 'Liberation Serif',serif;color:#2e2e2e;white-space:nowrap;letter-spacing:0.132px">имущества</div>
<div style="left:314.98px;top:214.99px;font:normal normal 13px/15.6px 'Liberation Serif',serif;color:#2e2e2e;white-space:nowrap;letter-spacing:0.056px">Площадь объекта</div>
<div style="left:345.86px;top:232.36px;font:normal normal 13px/15.6px 'Liberation Serif',serif;color:#2e2e2e;white-space:nowrap;letter-spacing:0.033px">(кв.м.)</div>
<div style="left:437.61px;top:214.99px;font:normal normal 13px/15.6px 'Liberation Serif',serif;color:#2e2e2e;white-space:nowrap;letter-spacing:0.332px">Прогнозируемая</div>
<div style="left:441.23px;top:232.36px;font:normal normal 13px/15.6px 'Liberation Serif',serif;color:#2e2e2e;white-space:nowrap;letter-spacing:0.156px">цена (тыс. руб.)</div>
<div style="left:550.98px;top:207.11px;font:normal normal 13px/15.6px 'Liberation Serif',serif;color:#2e2e2e;white-space:nowrap;letter-spacing:0.211px">Предпологаемый</div>
<div style="left:588.98px;top:223.99px;font:normal normal 13px/15.6px 'Liberation Serif',serif;color:#2e2e2e;white-space:nowrap;letter-spacing:-0.101px">срок</div>
<div style="left:561.73px;top:240.36px;font:normal normal 13px/15.6px 'Liberation Serif',serif;color:#2e2e2e;white-space:nowrap;letter-spacing:0.051px">приватизации</div>
<div style="left:689.98px;top:214.99px;font:normal normal 13px/15.6px 'Liberation Serif',serif;color:#2e2e2e;white-space:nowrap;letter-spacing:0.264px">Способ</div>
<div style="left:672.61px;top:232.36px;font:normal normal 13px/15.6px 'Liberation Serif',serif;color:#2e2e2e;white-space:nowrap;letter-spacing:0.107px">приватизации</div>
<div style="left:41.38px;top:295.61px;font:normal normal 13px/15.6px 'Liberation Serif',serif;color:#2e2e2e;white-space:nowrap;letter-spacing:0.000px">1</div>
<div style="left:66.61px;top:262.11px;font:normal normal 13px/15.6px 'Liberation Serif',serif;color:#2e2e2e;white-space:nowrap;letter-spacing:0.128px">Нежилое помещение, расположенное по</div>
<div style="left:66.61px;top:278.99px;font:normal normal 13px/15.6px 'Liberation Serif',serif;color:#2e2e2e;white-space:nowrap;letter-spacing:0.061px">адресу: п. Монино, ул. Новинское шоссе,</div>
<div style="left:66.61px;top:295.61px;font:normal normal 13px/15.6px 'Liberation Serif',serif;color:#2e2e2e;white-space:nowrap;letter-spacing:-0.105px">д.6</div>
<div style="left:305.73px;top:295.74px;font:normal normal 13px/15.6px 'Liberation Serif',serif;color:#2e2e2e;white-space:nowrap;letter-spacing:-0.793px">550</div>
<div style="left:466.36px;top:295.74px;font:normal normal 13px/15.6px 'Liberation Serif',serif;color:#2e2e2e;white-space:nowrap;letter-spacing:-0.410px">25000,0</div>
<div style="left:548.73px;top:295.74px;font:normal normal 13px/15.6px 'Liberation Serif',serif;color:#2e2e2e;white-space:nowrap;letter-spacing:0.159px">в течении года</div>
<div style="left:654.85px;top:295.74px;font:normal normal 13px/15.6px 'Liberation Serif',serif;color:#2e2e2e;white-space:nowrap;letter-spacing:0.208px">проведение торгов</div>
<div style="left:40.73px;top:332.49px;font:normal normal 16.6px/19.92px 'Liberation Serif',serif;color:#2e2e2e;white-space:nowrap;letter-spacing:0.000px">2</div>
<div style="left:66.61px;top:317.49px;font:normal normal 13px/15.6px 'Liberation Serif',serif;color:#2e2e2e;white-space:nowrap;letter-spacing:0.100px">Нежилое помещение, расположенное в</div>
<div style="left:66.61px;top:334.36px;font:normal normal 13px/15.6px 'Liberation Serif',serif;color:#2e2e2e;white-space:nowrap;letter-spacing:0.117px">здании дома офицеров</div>
<div style="left:305.73px;top:334.36px;font:normal normal 13px/15.6px 'Liberation Serif',serif;color:#2e2e2e;white-space:nowrap;letter-spacing:-0.793px">670</div>
<div style="left:466.36px;top:334.36px;font:normal normal 13px/15.6px 'Liberation Serif',serif;color:#2e2e2e;white-space:nowrap;letter-spacing:-0.410px">20000,0</div>
<div style="left:548.73px;top:334.36px;font:normal normal 13px/15.6px 'Liberation Serif',serif;color:#2e2e2e;white-space:nowrap;letter-spacing:0.159px">в течении года</div>
<div style="left:654.85px;top:334.36px;font:normal normal 13px/15.6px 'Liberation Serif',serif;color:#2e2e2e;white-space:nowrap;letter-spacing:0.208px">проведение торгов</div>
</div>
<div style="left:1265.0px;top:114.2px;width:15.0px;height:763.67px;background:#fff"></div>
<div style="left:1265.0px;top:114.2px;width:12.5px;height:20.8px;background:#eeebe4;border-top:1px solid #9d9d9d;box-sizing:border-box;"></div>
<div style="left:1266.38px;top:135.25px;width:11.0px;height:729.75px;background:#f8f7f5"></div>
<div style="left:1265.88px;top:120.12px;width:12.0px;height:2.4px;background:#333"></div>
<div style="left:1266.38px;top:122.38px;width:11.0px;height:12.88px;background:linear-gradient(90deg,#f6f5f2,#e6e4de);border:1px solid #dad8d2;box-sizing:border-box;"><svg style="left:2.4px;top:3.8px" width="6" height="4" viewBox="0 0 6 4"><path d="M0.5 3.6L3 1L5.5 3.6" fill="none" stroke="#444" stroke-width="1.4"/></svg></div>
<div style="left:1266.38px;top:135.25px;width:11.0px;height:632.88px;background:linear-gradient(90deg,#f3f2ee,#eae8e3 45%,#dedbd4);border:1px solid #d2cfc8;border-left-color:#e6e4df;box-sizing:border-box;border-radius:1.5px;"></div>
<div style="left:1268.5800000000002px;top:447.0px;width:6.6px;height:1.2px;background:#b5b2a9"></div>
<div style="left:1268.5800000000002px;top:449.6px;width:6.6px;height:1.2px;background:#b5b2a9"></div>
<div style="left:1268.5800000000002px;top:452.2px;width:6.6px;height:1.2px;background:#b5b2a9"></div>
<div style="left:1268.5800000000002px;top:454.8px;width:6.6px;height:1.2px;background:#b5b2a9"></div>
<div style="left:1266.38px;top:865.0px;width:11.0px;height:13.75px;background:linear-gradient(90deg,#f6f5f2,#e6e4de);border:1px solid #d2cfc8;box-sizing:border-box;"><svg style="left:2.2px;top:5px" width="6.6" height="3.6" viewBox="0 0 6 3.4"><path d="M0 0H6L3 3.4Z" fill="#333"/></svg></div>
<div style="left:1277.38px;top:21px;width:2.619999999999891px;height:911.25px;background:#f6f5f3"></div>
<div style="left:0px;top:877.87px;width:1280px;height:13.25px;background:#f4f3f0;"></div>
<div style="left:0px;top:877.87px;width:1265.5px;height:1px;background:#cfcdc7"></div>
<div style="left:0px;top:878.87px;width:52.5px;height:11.75px;background:#f0eee9;border-top:1px solid #f8f7f4;box-sizing:border-box;"></div>
<div style="left:0px;top:877.87px;width:1.2px;height:12.75px;background:#8f8f8f"></div>
<svg style="left:2.0px;top:882.85px" width="5.6" height="5.8" viewBox="0 0 6 6"><path d="M0.6 0V6M6 0L2 3L6 6Z" fill="#222" stroke="#222" stroke-width="0.9"/></svg>
<svg style="left:18.25px;top:882.85px" width="5.6" height="5.8" viewBox="0 0 6 6"><path d="M5 0L1 3L5 6Z" fill="#222" stroke="#222" stroke-width="0.9"/></svg>
<svg style="left:30.5px;top:882.85px" width="5.6" height="5.8" viewBox="0 0 6 6"><path d="M1 0L5 3L1 6Z" fill="#222" stroke="#222" stroke-width="0.9"/></svg>
<svg style="left:43.25px;top:882.85px" width="5.6" height="5.8" viewBox="0 0 6 6"><path d="M5.4 0V6M0 0L4 3L0 6Z" fill="#222" stroke="#222" stroke-width="0.9"/></svg>
<div style="left:0;top:877.87px;width:1015.75px;height:14.25px;overflow:hidden">
<svg style="left:0;top:0" width="1015.75" height="14.25" viewBox="0 0 1015.75 14.25"><path d="M952.75 1.0L1053.5 1.0L1046.5 12.75L959.75 12.75Z" fill="#ebe9e4"/><path d="M959.75 12.75L1046.5 12.75" stroke="#aeaca6" stroke-width="1"/><path d="M952.75 1.0L1053.5 1.0" stroke="#d6d4ce" stroke-width="1"/><path d="M1046.5 12.75L1053.5 1.0" stroke="#2a2a2a" stroke-width="1.15"/><path d="M956.65 7.175L959.15 12.15" stroke="#2a2a2a" stroke-width="1.15"/><path d="M852.25 1.0L959.75 1.0L952.75 12.75L859.25 12.75Z" fill="#ebe9e4"/><path d="M859.25 12.75L952.75 12.75" stroke="#aeaca6" stroke-width="1"/><path d="M852.25 1.0L959.75 1.0" stroke="#d6d4ce" stroke-width="1"/><path d="M952.75 12.75L959.75 1.0" stroke="#2a2a2a" stroke-width="1.15"/><path d="M856.15 7.175L858.65 12.15" stroke="#2a2a2a" stroke-width="1.15"/><path d="M766.12 1.0L859.25 1.0L852.25 12.75L773.12 12.75Z" fill="#ebe9e4"/><path d="M773.12 12.75L852.25 12.75" stroke="#aeaca6" stroke-width="1"/><path d="M766.12 1.0L859.25 1.0" stroke="#d6d4ce" stroke-width="1"/><path d="M852.25 12.75L859.25 1.0" stroke="#2a2a2a" stroke-width="1.15"/><path d="M770.02 7.175L772.52 12.15" stroke="#2a2a2a" stroke-width="1.15"/><path d="M683.5 1.0L773.12 1.0L766.12 12.75L690.5 12.75Z" fill="#ebe9e4"/><path d="M690.5 12.75L766.12 12.75" stroke="#aeaca6" stroke-width="1"/><path d="M683.5 1.0L773.12 1.0" stroke="#d6d4ce" stroke-width="1"/><path d="M766.12 12.75L773.12 1.0" stroke="#2a2a2a" stroke-width="1.15"/><path d="M687.4 7.175L689.9 12.15" stroke="#2a2a2a" stroke-width="1.15"/><path d="M617.5 1.0L690.5 1.0L683.5 12.75L624.5 12.75Z" fill="#ebe9e4"/><path d="M624.5 12.75L683.5 12.75" stroke="#aeaca6" stroke-width="1"/><path d="M617.5 1.0L690.5 1.0" stroke="#d6d4ce" stroke-width="1"/><path d="M683.5 12.75L690.5 1.0" stroke="#2a2a2a" stroke-width="1.15"/><path d="M621.4 7.175L623.9 12.15" stroke="#2a2a2a" stroke-width="1.15"/><path d="M532.75 1.0L624.5 1.0L617.5 12.75L539.75 12.75Z" fill="#ebe9e4"/><path d="M539.75 12.75L617.5 12.75" stroke="#aeaca6" stroke-width="1"/><path d="M532.75 1.0L624.5 1.0" stroke="#d6d4ce" stroke-width="1"/><path d="M617.5 12.75L624.5 1.0" stroke="#2a2a2a" stroke-width="1.15"/><path d="M536.65 7.175L539.15 12.15" stroke="#2a2a2a" stroke-width="1.15"/><path d="M477.0 1.0L539.75 1.0L532.75 12.75L484.0 12.75Z" fill="#ebe9e4"/><path d="M484.0 12.75L532.75 12.75" stroke="#aeaca6" stroke-width="1"/><path d="M477.0 1.0L539.75 1.0" stroke="#d6d4ce" stroke-width="1"/><path d="M532.75 12.75L539.75 1.0" stroke="#2a2a2a" stroke-width="1.15"/><path d="M480.9 7.175L483.4 12.15" stroke="#2a2a2a" stroke-width="1.15"/><path d="M423.5 1.0L484.0 1.0L477.0 12.75L430.5 12.75Z" fill="#ebe9e4"/><path d="M430.5 12.75L477.0 12.75" stroke="#aeaca6" stroke-width="1"/><path d="M423.5 1.0L484.0 1.0" stroke="#d6d4ce" stroke-width="1"/><path d="M477.0 12.75L484.0 1.0" stroke="#2a2a2a" stroke-width="1.15"/><path d="M427.4 7.175L429.9 12.15" stroke="#2a2a2a" stroke-width="1.15"/><path d="M350.5 1.0L430.5 1.0L423.5 12.75L357.5 12.75Z" fill="#ebe9e4"/><path d="M357.5 12.75L423.5 12.75" stroke="#aeaca6" stroke-width="1"/><path d="M350.5 1.0L430.5 1.0" stroke="#d6d4ce" stroke-width="1"/><path d="M423.5 12.75L430.5 1.0" stroke="#2a2a2a" stroke-width="1.15"/><path d="M354.4 7.175L356.9 12.15" stroke="#2a2a2a" stroke-width="1.15"/><path d="M267.88 1.0L357.5 1.0L350.5 12.75L274.88 12.75Z" fill="#ebe9e4"/><path d="M274.88 12.75L350.5 12.75" stroke="#aeaca6" stroke-width="1"/><path d="M267.88 1.0L357.5 1.0" stroke="#d6d4ce" stroke-width="1"/><path d="M350.5 12.75L357.5 1.0" stroke="#2a2a2a" stroke-width="1.15"/><path d="M271.78 7.175L274.28 12.15" stroke="#2a2a2a" stroke-width="1.15"/><path d="M221.88 1.0L274.88 1.0L267.88 12.75L228.88 12.75Z" fill="#ebe9e4"/><path d="M228.88 12.75L267.88 12.75" stroke="#aeaca6" stroke-width="1"/><path d="M221.88 1.0L274.88 1.0" stroke="#d6d4ce" stroke-width="1"/><path d="M267.88 12.75L274.88 1.0" stroke="#2a2a2a" stroke-width="1.15"/><path d="M225.78 7.175L228.28 12.15" stroke="#2a2a2a" stroke-width="1.15"/><path d="M133.75 1.0L228.88 1.0L221.88 12.75L140.75 12.75Z" fill="#ebe9e4"/><path d="M140.75 12.75L221.88 12.75" stroke="#aeaca6" stroke-width="1"/><path d="M133.75 1.0L228.88 1.0" stroke="#d6d4ce" stroke-width="1"/><path d="M221.88 12.75L228.88 1.0" stroke="#2a2a2a" stroke-width="1.15"/><path d="M137.65 7.175L140.15 12.15" stroke="#2a2a2a" stroke-width="1.15"/><path d="M52.3125 0L140.75 0L140.75 1.0L133.75 12.75L56.6875 12.75Z" fill="#fff"/><path d="M52.3125 0.5L56.6875 12.75L133.75 12.75L140.75 1.0" fill="none" stroke="#1a1a1a" stroke-width="1.2"/></svg>
<div style="left:60.72px;top:0.98px;font:normal bold 10.2px/12.24px 'Liberation Sans',sans-serif;color:#000;white-space:nowrap;letter-spacing:0.357px">4-План пр НИ</div>
<div style="left:149.37px;top:1.42px;font:normal normal 9.6px/11.52px 'Liberation Sans',sans-serif;color:#3a3a3a;white-space:nowrap;letter-spacing:-0.190px">5-Пл пр. земли</div>
<div style="left:233.87px;top:1.42px;font:normal normal 9.6px/11.52px 'Liberation Sans',sans-serif;color:#3a3a3a;white-space:nowrap;letter-spacing:-0.537px">6-Безв</div>
<div style="left:280.62px;top:1.42px;font:normal normal 9.6px/11.52px 'Liberation Sans',sans-serif;color:#3a3a3a;white-space:nowrap;letter-spacing:-0.072px">7-безв ОБРАЗ</div>
<div style="left:362.12px;top:1.42px;font:normal normal 9.6px/11.52px 'Liberation Sans',sans-serif;color:#3a3a3a;white-space:nowrap;letter-spacing:0.392px">8- Культура</div>
<div style="left:433.87px;top:1.42px;font:normal normal 9.6px/11.52px 'Liberation Sans',sans-serif;color:#3a3a3a;white-space:nowrap;letter-spacing:0.101px">9- Спорт</div>
<div style="left:489.49px;top:1.42px;font:normal normal 9.6px/11.52px 'Liberation Sans',sans-serif;color:#3a3a3a;white-space:nowrap;letter-spacing:-0.049px">10 - ВСР</div>
<div style="left:546.99px;top:1.42px;font:normal normal 9.6px/11.52px 'Liberation Sans',sans-serif;color:#3a3a3a;white-space:nowrap;letter-spacing:-0.074px">11-РАСХОДЫ</div>
<div style="left:630.74px;top:1.42px;font:normal normal 9.6px/11.52px 'Liberation Sans',sans-serif;color:#3a3a3a;white-space:nowrap;letter-spacing:-0.158px">12-ИВФДБ</div>
<div style="left:697.74px;top:1.42px;font:normal normal 9.6px/11.52px 'Liberation Sans',sans-serif;color:#3a3a3a;white-space:nowrap;letter-spacing:-0.103px">13-ИстВДефБ</div>
<div style="left:780.37px;top:1.42px;font:normal normal 9.6px/11.52px 'Liberation Sans',sans-serif;color:#3a3a3a;white-space:nowrap;letter-spacing:0.303px">14-МунВЗайм</div>
<div style="left:867.74px;top:1.42px;font:normal normal 9.6px/11.52px 'Liberation Sans',sans-serif;color:#3a3a3a;white-space:nowrap;letter-spacing:0.033px">15- МунГарантии</div>
<div style="left:975.62px;top:1.42px;font:normal normal 9.6px/11.52px 'Liberation Sans',sans-serif;color:#3a3a3a;white-space:nowrap;letter-spacing:0.067px">16-долгос</div>
</div>
<div style="left:1018.88px;top:878.37px;width:2px;height:12.25px;background:#333"></div>
<div style="left:1021.62px;top:878.87px;width:242.13px;height:11.75px;background:#f8f8f6"></div>
<div style="left:1021.62px;top:878.87px;width:12.38px;height:11.25px;background:linear-gradient(#f8f7f5,#e9e7e2);border:1px solid #dddbd5;box-sizing:border-box;"><svg style="left:3.4px;top:2.4px" width="4.4" height="6" viewBox="0 0 4.4 6"><path d="M3.7 0.6L0.8 3L3.7 5.4" fill="none" stroke="#333" stroke-width="1.5"/></svg></div>
<div style="left:1034.0px;top:878.87px;width:144.25px;height:11.25px;background:linear-gradient(#f3f2ef,#e6e4de 60%,#dcd9d2);border:1px solid #cfccc5;box-sizing:border-box;border-radius:1px;"></div>
<div style="left:1100.75px;top:881.47px;width:1.1px;height:6px;background:#b5b2a9"></div>
<div style="left:1103.25px;top:881.47px;width:1.1px;height:6px;background:#b5b2a9"></div>
<div style="left:1105.75px;top:881.47px;width:1.1px;height:6px;background:#b5b2a9"></div>
<div style="left:1108.25px;top:881.47px;width:1.1px;height:6px;background:#b5b2a9"></div>
<div style="left:1245.88px;top:879.37px;width:14.0px;height:11.25px;background:linear-gradient(#f8f7f5,#e9e7e2);border:1px solid #d6d3cd;box-sizing:border-box;"><svg style="left:4.6px;top:2.4px" width="4.4" height="6" viewBox="0 0 4.4 6"><path d="M0.7 0.6L3.6 3L0.7 5.4" fill="none" stroke="#333" stroke-width="1.5"/></svg></div>
<div style="left:1264.25px;top:877.37px;width:2px;height:13.25px;background:#222"></div>
<div style="left:1266.25px;top:878.37px;width:11.25px;height:12.75px;background:#eceae5"></div>
<div style="left:0px;top:890.62px;width:1280px;height:21.629999999999995px;background:#eceae5;border-top:1.5px solid #f8f7f5;"></div>
<div style="left:5.05px;top:896.93px;font:normal normal 11.3px/13.56px 'Liberation Sans',sans-serif;color:#2a2a2a;white-space:nowrap;letter-spacing:-0.147px">Готово</div>
<div style="left:1160.85px;top:898.53px;font:normal normal 10px/12.0px 'Liberation Sans',sans-serif;color:#3a3a3a;white-space:nowrap;letter-spacing:-0.241px">NUM</div>
<div style="left:954.12px;top:893.12px;width:1.2px;height:16px;background:#f6f5f2"></div>
<div style="left:989.75px;top:893.12px;width:1.2px;height:16px;background:#f6f5f2"></div>
<div style="left:1101.0px;top:893.12px;width:1.2px;height:16px;background:#f6f5f2"></div>
<div style="left:1129.25px;top:893.12px;width:1.2px;height:16px;background:#f6f5f2"></div>
<div style="left:1217.0px;top:893.12px;width:1.2px;height:16px;background:#f6f5f2"></div>
<div style="left:1244.38px;top:893.12px;width:1.2px;height:16px;background:#f6f5f2"></div>
</div></body></html>
